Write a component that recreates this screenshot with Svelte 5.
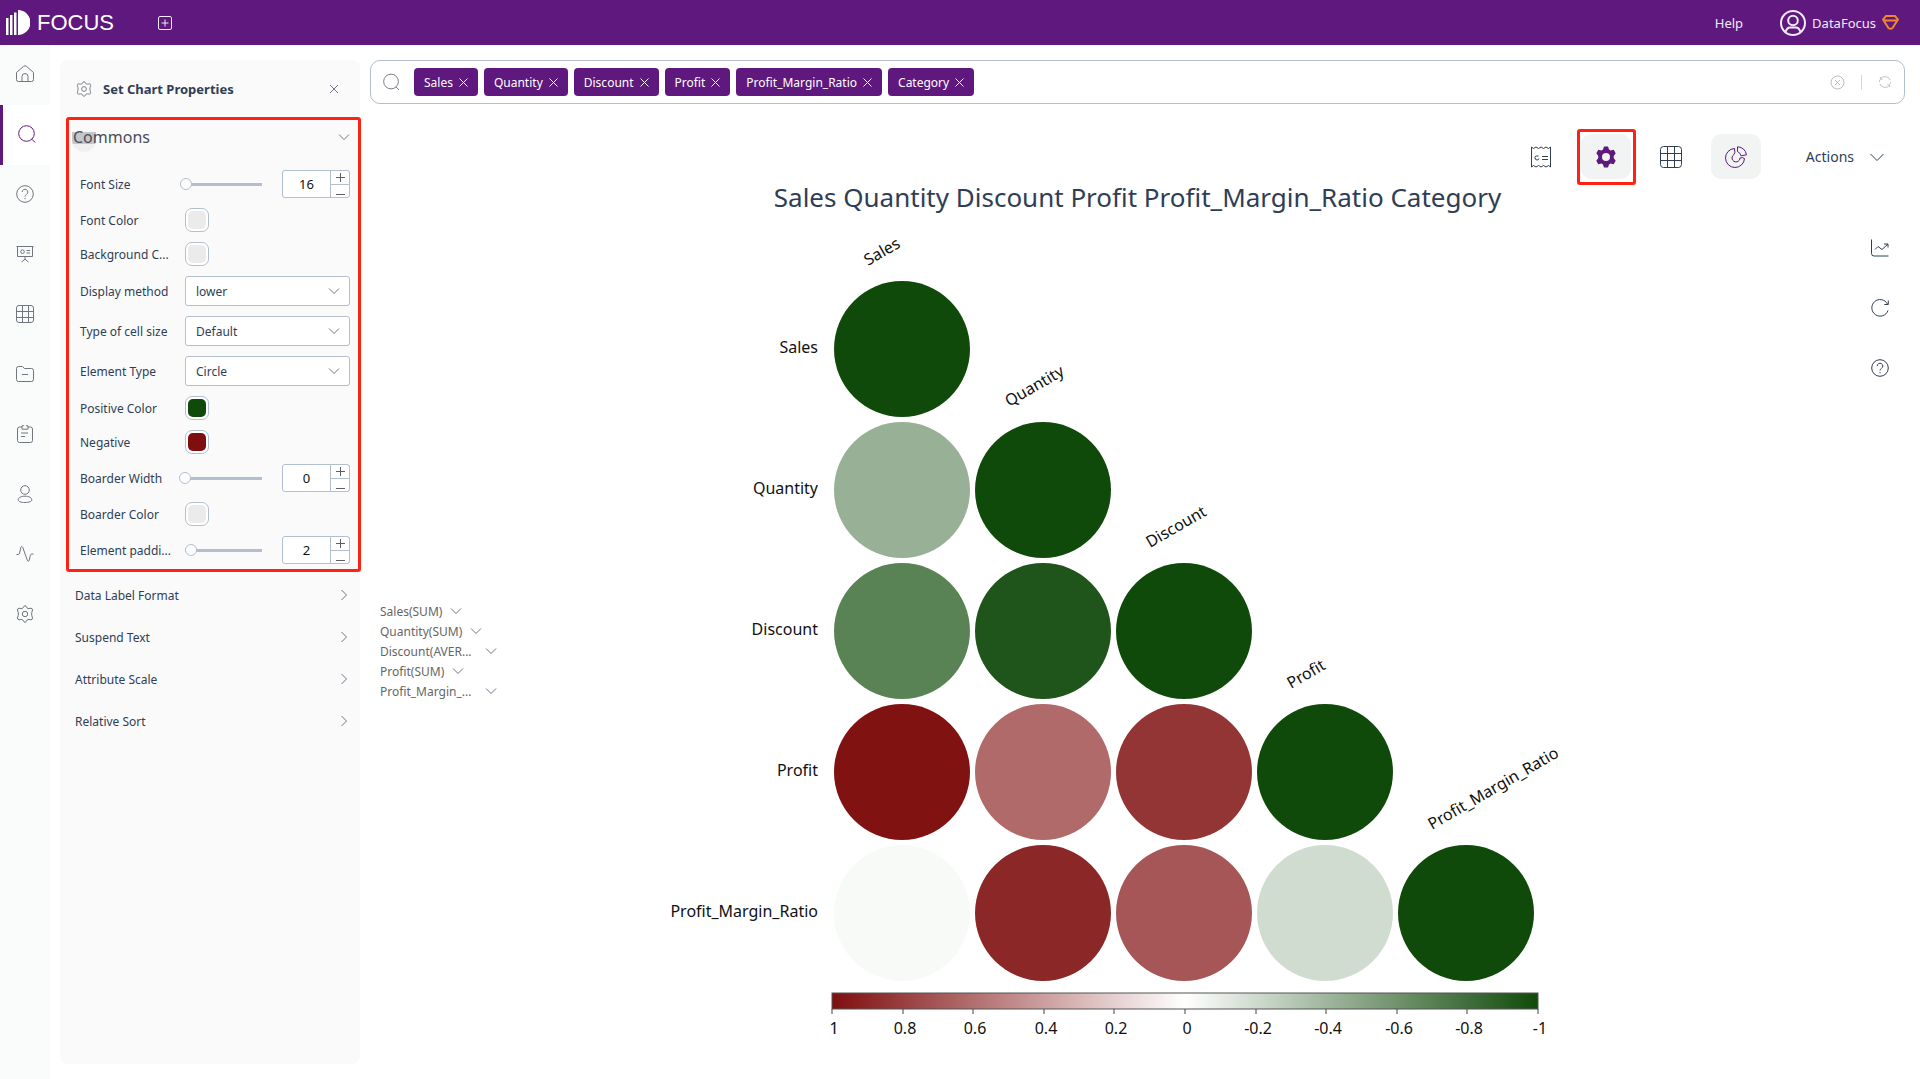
<script>
  const navItems = ['home', 'search', 'help', 'board', 'table', 'folder', 'clipboard', 'user', 'pulse', 'gear'];

  let fields = [
    { label: 'Font Size', type: 'range', value: 16, min: 12, max: 280 },
    { label: 'Font Color', type: 'color', value: '#ebebeb' },
    { label: 'Background C...', type: 'color', value: '#ebebeb' },
    { label: 'Display method', type: 'select', value: 'lower', options: ['lower', 'upper', 'full'] },
    { label: 'Type of cell size', type: 'select', value: 'Default', options: ['Default', 'Custom'] },
    { label: 'Element Type', type: 'select', value: 'Circle', options: ['Circle', 'Square'] },
    { label: 'Positive Color', type: 'color', value: '#104a0a' },
    { label: 'Negative', type: 'color', value: '#7f0e0e' },
    { label: 'Boarder Width', type: 'range', value: 0, min: 0, max: 24 },
    { label: 'Boarder Color', type: 'color', value: '#ebebeb' },
    { label: 'Element paddi...', type: 'range', value: 2, min: 0, max: 24 },
  ];

  const sections = ['Data Label Format', 'Suspend Text', 'Attribute Scale', 'Relative Sort'];

  let tags = ['Sales', 'Quantity', 'Discount', 'Profit', 'Profit_Margin_Ratio', 'Category'];

  const measures = [
    { text: 'Sales(SUM)' },
    { text: 'Quantity(SUM)' },
    { text: 'Discount(AVER...', cut: true },
    { text: 'Profit(SUM)' },
    { text: 'Profit_Margin_...', cut: true },
  ];

  const names = ['Sales', 'Quantity', 'Discount', 'Profit', 'Profit_Margin_Ratio'];

  // lower triangle, one row per measure
  const matrix = [
    ['#104a0a'],
    ['#98b096', '#104a0a'],
    ['#5a8355', '#1f551a', '#104a0a'],
    ['#811212', '#b06a6a', '#943535', '#104a0a'],
    ['#f8faf8', '#8c2727', '#a65656', '#d1dcd0', '#104a0a'],
  ];

  const ticks = ['1', '0.8', '0.6', '0.4', '0.2', '0', '-0.2', '-0.4', '-0.6', '-0.8', '-1'];

  const pitch = 141;
  const cx = (c) => 402 + c * pitch;
  const cy = (r) => 133 + r * pitch;
  const tickX = (i) => Math.round(332 + i * 70.6);

  function removeTag(tag) {
    tags = tags.filter((t) => t !== tag);
  }

  function step(field, by) {
    field.value = Math.min(field.max, Math.max(field.min, field.value + by));
    fields = fields;
  }
</script>

<svg class="defs" aria-hidden="true">
  <symbol id="home" viewBox="0 0 18 18"><path d="M.5 7.500 7.600 1.300q1.400-1 2.800 0L17.500 7.500v7.200q0 1.800-1.800 1.800H2.300Q.5 16.500.5 14.700zM6 16.500v-5a3 3 0 0 1 6 0v5" /></symbol>
  <symbol id="search" viewBox="0 0 18 18"><circle cx="8.500" cy="8.500" r="7.800" /><path d="m13.800 14.200 3.200 3.200" /></symbol>
  <symbol id="help" viewBox="0 0 18 18"><circle cx="9" cy="9" r="8.300" /><path d="M6.200 7a2.800 2.800 0 1 1 4.300 2.400Q9 10.300 9 11.600M9 13v1.200" /></symbol>
  <symbol id="board" viewBox="0 0 18 18"><path d="M.5 1.500h17M1.500 1.500v10h15v-10M9 11.500v3M5.500 17 9 14.200l3.500 2.800M10.500 5.500H14M10.500 8H14" /><circle cx="6.500" cy="6.700" r="1.800" /></symbol>
  <symbol id="table" viewBox="0 0 18 18"><rect x="0.500" y="0.500" width="17" height="17" rx="2.500" /><path d="M.5 6.500h17M.5 12.500h17M6.500.5v17M12.500.5v17" /></symbol>
  <symbol id="folder" viewBox="0 0 18 18"><path d="M.5 3.500q0-2 2-2h4l2 2h7q2 0 2 2v9q0 2-2 2h-13q-2 0-2-2zM6 9.500h6" /></symbol>
  <symbol id="clipboard" viewBox="0 0 18 18"><path d="M6 2H3.500Q1.500 2 1.500 4v11.500q0 2 2 2h11q2 0 2-2V4q0-2-2-2H12M6 .8h1.500a1.500 1.500 0 0 1 3 0H12v3.400H6zM5 8h7M5 11.500h4" /></symbol>
  <symbol id="user" viewBox="0 0 18 18"><circle cx="9" cy="5" r="4.300" /><path d="M9 11.200c-4 0-6.800 1.600-6.800 3.500S5 17.500 9 17.500s6.800-.9 6.800-2.800-2.800-3.500-6.800-3.500z" /></symbol>
  <symbol id="pulse" viewBox="0 0 18 18"><path d="M.5 9.500h2Q3.200 9.500 3.600 8l1.200-5.500Q5.600.2 6.800 2.500l4.500 12.700q1.200 2.500 2-.2l1-4.500q.4-1.500 1.400-1.500h1.800" /></symbol>
  <symbol id="gear" viewBox="0 0 18 18"><path d="M8 1.200Q9 .2 10 1.200L11.300 3.200Q12 3.700 13 3.500L15 3.200Q16.500 3.400 16.500 5L15.800 7.500Q15.500 9 15.800 10.500L16.500 13Q16.500 14.600 15 14.800L13 14.500Q12 14.300 11.300 14.800L10 16.800Q9 17.800 8 16.800L6.700 14.800Q6 14.300 5 14.500L3 14.800Q1.500 14.600 1.500 13L2.200 10.500Q2.500 9 2.200 7.500L1.500 5Q1.500 3.400 3 3.200L5 3.500Q6 3.700 6.700 3.200z" /><circle cx="9" cy="9" r="2.700" /></symbol>
  <symbol id="down" viewBox="0 0 12 12"><path d="m1 3.500 5 5 5-5" /></symbol>
  <symbol id="right" viewBox="0 0 12 12"><path d="m3.500 1 5 5-5 5" /></symbol>
  <symbol id="close" viewBox="0 0 12 12"><path d="m2 2 8 8M10 2l-8 8" /></symbol>
</svg>

<div class="page">
  <header class="topbar">
    <a class="logo" href="/" aria-label="FOCUS home">
      <svg width="24" height="25" viewBox="0 0 24 25" fill="#fff">
        <path d="M0 8h2.500v17H0zM4 5h2.500v20H4zM8 2.500h2.500V25H8zM12 0a12.500 12.500 0 0 1 0 25z" />
      </svg>
      <span>FOCUS</span>
    </a>
    <button class="add" aria-label="New">
      <svg width="14" height="14" viewBox="0 0 14 14"><rect x="0.500" y="0.500" width="13" height="13" rx="1.500" /><path d="M7 3.500v7M3.500 7h7" /></svg>
    </button>
    <a class="help" href="/help">Help</a>
    <button class="account">
      <svg width="26" height="26" viewBox="0 0 26 26"><circle cx="13" cy="13" r="12" /><circle cx="13" cy="10.500" r="4.800" /><path d="M5.500 22q1.500-4.500 4.500-4.500h6q3 0 4.500 4.500" /></svg>
      <span>DataFocus</span>
      <svg class="gem" width="17" height="15" viewBox="0 0 17 15"><path d="M4 1h9l3 3.500L10.500 13q-2 1.500-4 0L1 4.500zM1.500 5.500h14" /></svg>
    </button>
  </header>

  <div class="body">
    <nav>
      {#each navItems as item}
        <a href="/{item}" class:active={item === 'search'} aria-label={item}>
          <svg class="icon"><use href="#{item}" /></svg>
        </a>
      {/each}
    </nav>

    <aside>
      <div class="aside-head">
        <svg class="icon small"><use href="#gear" /></svg>
        <h1>Set Chart Properties</h1>
        <button aria-label="Close"><svg class="chev"><use href="#close" /></svg></button>
      </div>

      <section class="commons">
        <button class="commons-head">
          <span>Commons</span>
          <svg class="chev"><use href="#down" /></svg>
        </button>
        {#each fields as field, i}
          <div class="field {field.type}">
            <label for="field-{i}">{field.label}</label>
            {#if field.type === 'range'}
              <input id="field-{i}" class="slider" type="range" min={field.min} max={field.max} bind:value={field.value}>
              <div class="number">
                <input type="number" aria-label={field.label} bind:value={field.value}>
                <div class="steps">
                  <button aria-label="Increase" on:click={() => step(field, 1)}><svg width="11" height="11" viewBox="0 0 11 11"><path d="M5.500 1v9M1 5.500h9" /></svg></button>
                  <button aria-label="Decrease" on:click={() => step(field, -1)}><svg width="11" height="11" viewBox="0 0 11 11"><path d="M1 8.500h9" /></svg></button>
                </div>
              </div>
            {:else if field.type === 'color'}
              <input id="field-{i}" class="swatch" type="color" bind:value={field.value}>
            {:else}
              <div class="drop">
                <select id="field-{i}" bind:value={field.value}>
                  {#each field.options as option}
                    <option>{option}</option>
                  {/each}
                </select>
                <svg class="chev"><use href="#down" /></svg>
              </div>
            {/if}
          </div>
        {/each}
      </section>

      {#each sections as name}
        <button class="section">
          <span>{name}</span>
          <svg class="chev"><use href="#right" /></svg>
        </button>
      {/each}
    </aside>

    <main>
      <div class="searchbar">
        <svg class="icon lens"><use href="#search" /></svg>
        {#each tags as tag}
          <span class="tag">
            {tag}
            <button aria-label="Remove {tag}" on:click={() => removeTag(tag)}><svg viewBox="0 0 9 9"><path d="m.5.5 8 8M8.500.5l-8 8" /></svg></button>
          </span>
        {/each}
        <input type="text" aria-label="Search">
        <button class="ghost" aria-label="Clear">
          <svg width="15" height="15" viewBox="0 0 15 15"><circle cx="7.500" cy="7.500" r="6.500" /><path d="m5 5 5 5M10 5l-5 5" /></svg>
        </button>
        <i class="divider"></i>
        <button class="ghost" aria-label="Refresh">
          <svg width="14" height="14" viewBox="0 0 15 15"><path d="M2 9.500a6 6 0 0 0 10.500 1.300M13 5.500A6 6 0 0 0 2.500 4.200M1.500 7.500a6 6 0 0 1 .3-2M13.500 7.500a6 6 0 0 1-.3 2M2.500 2v2.500H5M12.500 13v-2.500H10" /></svg>
        </button>
      </div>

      <div class="toolbar">
        <button aria-label="Formula">
          <svg width="20" height="22" viewBox="0 0 20 22"><path d="M.5 1v20M19.500 1v20M.5 1l2 1.500L5 1l2.500 1.500L10 1l2.500 1.500L15 1l2.500 1.500L19.500 1M.5 21l2-1.500L5 21l2.500-1.500L10 21l2.500-1.500L15 21l2.500-1.500 2 1.500M7.500 10H5.300Q4 10 4 11.500 4 14 6 14t2-1.500M11 10.500h6M11 13.500h6" /></svg>
        </button>
        <button class="on marked" aria-label="Chart settings">
          <svg width="22" height="22" viewBox="0 0 22 22"><path class="solid" fill-rule="evenodd" d="M9 .5h4l1 3 1.500.9 3.200-.6 2 3.500L18.700 10v2l2 2.700-2 3.500-3.200-.6-1.500.9-1 3H9l-1-3-1.500-.9-3.200.6-2-3.500L3.300 12v-2l-2-2.700 2-3.500 3.200.6L8 3.500zM11 7a4 4 0 1 0 0 8 4 4 0 0 0 0-8z" /></svg>
        </button>
        <button aria-label="Table view">
          <svg width="22" height="22" viewBox="0 0 22 22"><rect x="0.500" y="0.500" width="21" height="21" rx="3" /><path d="M.5 7.500h21M.5 14.500h21M7.500.5v21M14.500.5v21" /></svg>
        </button>
        <button class="on" aria-label="Chart view">
          <svg class="violet" width="22" height="22" viewBox="0 0 22 22"><path d="M9.500 2.500A9.500 9.500 0 1 0 19.500 12.500q-2-1.500-4.500-.5A4 4 0 1 1 9 8.500Q10.500 7.500 9.500 2.500zM12.500.8q7.500.5 9 8l-5.500 1Q15.500 7 12.500 5.500z" /></svg>
        </button>
        <button class="actions">
          Actions
          <svg width="14" height="14" viewBox="0 0 14 14"><path d="m.5 4 6.500 6.500L13.500 4" /></svg>
        </button>
      </div>

      <h2>Sales Quantity Discount Profit Profit_Margin_Ratio Category</h2>

      <div class="stage">
        <ul class="measures">
          {#each measures as m}
            <li><button><span class:cut={m.cut}>{m.text}</span><svg class="chev"><use href="#down" /></svg></button></li>
          {/each}
        </ul>

        <svg class="chart" viewBox="0 0 1355 848" role="img" aria-label="Correlation matrix">
          <defs>
            <linearGradient id="scale">
              <stop offset="0" stop-color="#7f0e0e" />
              <stop offset="0.500" stop-color="#fff" />
              <stop offset="1" stop-color="#104a0a" />
            </linearGradient>
          </defs>
          {#each matrix as row, r}
            <text class="row-label" x="318" y={cy(r) + 4}>{names[r]}</text>
            <text transform="translate({cx(r) - 34} {cy(r) - 83}) rotate(-30)">{names[r]}</text>
            {#each row as fill, c}
              <circle cx={cx(c)} cy={cy(r)} r="68" {fill} />
            {/each}
          {/each}
          <rect x="332" y="777" width="706" height="16" fill="url(#scale)" stroke="#555" />
          {#each ticks as tick, i}
            <path class="tick" d="M{tickX(i)} 793v5" />
            <text class="tick-label" x={tickX(i) + 2} y="818">{tick}</text>
          {/each}
        </svg>

        <div class="side">
          <button aria-label="Trend">
            <svg class="icon" viewBox="0 0 18 18"><path d="M.5.5v14q0 2.500 2.500 2.500h14.500M4 10.500l3-3 4 3 6-5.500M13 5h4v3.500" /></svg>
          </button>
          <button aria-label="Reload">
            <svg class="icon" viewBox="0 0 18 18"><path d="M17 11.500a8.300 8.300 0 1 1-.5-6.500M17.300 1.500V5.500h-4" /></svg>
          </button>
          <button aria-label="Help"><svg class="icon"><use href="#help" /></svg></button>
        </div>
      </div>
    </main>
  </div>
</div>

<style>
  :global(body) {
    margin: 0;
    background: #fff;
  }
  .page {
    min-height: 100vh;
    display: flex;
    flex-direction: column;
    font-family: "Noto Sans", "Open Sans", sans-serif;
    font-size: 12px;
    color: #2f3e55;
  }
  .defs {
    position: absolute;
    width: 0;
    height: 0;
  }
  button {
    font: inherit;
    color: inherit;
    background: none;
    border: 0;
    padding: 0;
    display: flex;
    align-items: center;
    cursor: pointer;
  }
  a {
    color: inherit;
    text-decoration: none;
  }
  svg {
    fill: none;
    stroke: currentColor;
    flex: none;
  }
  .icon {
    width: 18px;
    height: 18px;
  }
  .icon.small {
    width: 16px;
    height: 16px;
  }
  .chev {
    width: 12px;
    height: 12px;
    color: #6d7688;
  }

  .topbar {
    height: 45px;
    background: #5e187e;
    color: #f3ebf6;
    font-size: 13px;
    display: flex;
    align-items: center;
    padding: 0 21px 0 6px;
  }
  .logo {
    display: flex;
    align-items: center;
    gap: 7px;
    color: #fff;
    font: 22px "Liberation Sans", Arial, sans-serif;
  }
  .logo svg {
    stroke: none;
    fill: #fff;
  }
  .add {
    margin-left: 44px;
  }
  .help {
    margin-left: auto;
  }
  .account {
    margin-left: 37px;
    gap: 6px;
  }
  .account svg {
    stroke-width: 2;
  }
  .account .gem {
    color: #f0862f;
  }

  .body {
    flex: 1;
    display: flex;
  }
  nav {
    width: 50px;
    background: #fafcfb;
    color: #70757e;
  }
  nav a {
    height: 60px;
    box-sizing: border-box;
    padding-bottom: 2px;
    display: flex;
    align-items: center;
    justify-content: center;
  }
  nav a.active {
    background: #fff;
    color: #5e187e;
    border-left: 3px solid #5e187e;
  }

  aside {
    width: 300px;
    margin: 15px 10px;
    background: #fafafb;
    border-radius: 8px;
    flex: none;
  }
  .aside-head {
    height: 57px;
    display: flex;
    align-items: center;
    padding: 0 20px 0 16px;
  }
  .aside-head .icon {
    color: #70757e;
  }
  h1 {
    margin: 0 auto 0 11px;
    font-size: 13px;
    font-weight: 700;
  }
  .commons {
    border: 3px solid #ff2213;
    border-radius: 3px;
    margin: 0 -1px 2px 6px;
  }
  .commons-head {
    position: relative;
    width: 100%;
    height: 34px;
    margin-bottom: 11px;
    padding: 0 8px 0 4px;
    justify-content: space-between;
    font-size: 16px;
    color: #4a4e58;
  }
  .commons-head span {
    position: relative;
  }
  .commons-head::before {
    content: "";
    position: absolute;
    left: 3px;
    top: 12px;
    width: 24px;
    height: 20px;
    background: linear-gradient(#c6c6ca 60%, #f0f0f1 60%);
    border-radius: 0 0 12px 12px;
  }
  .field {
    display: flex;
    align-items: center;
    height: 34px;
    padding: 0 8px 0 11px;
  }
  .field.range {
    height: 38px;
  }
  .field.select {
    height: 40px;
  }
  label {
    width: 105px;
    flex: none;
    white-space: nowrap;
  }
  .slider {
    appearance: none;
    flex: none;
    width: 83px;
    height: 12px;
    margin: 0 20px 0 -6px;
    background: linear-gradient(#b1bfce, #b1bfce) right center / 77px 3px no-repeat;
  }
  .slider::-webkit-slider-thumb {
    appearance: none;
    width: 12px;
    height: 12px;
    box-sizing: border-box;
    border: 1px solid #b1bfce;
    border-radius: 50%;
    background: #fff;
  }
  .number {
    flex: 1;
    min-width: 0;
    height: 28px;
    box-sizing: border-box;
    display: flex;
    border: 1px solid #b1bfce;
    border-radius: 3px;
    background: #fff;
  }
  .number input {
    appearance: textfield;
    flex: 1;
    width: 0;
    min-width: 0;
    border: 0;
    padding: 0;
    background: none;
    font: 13px "Noto Sans", sans-serif;
    color: #111;
    text-align: center;
  }
  .number input::-webkit-inner-spin-button {
    display: none;
  }
  .steps {
    width: 18px;
    flex: none;
    border-left: 1px solid #b1bfce;
    display: flex;
    flex-direction: column;
  }
  .steps button {
    height: 13px;
    justify-content: center;
    color: #5a5f70;
  }
  .steps button + button {
    box-sizing: border-box;
    border-top: 1px solid #b1bfce;
  }
  .swatch {
    appearance: none;
    width: 24px;
    height: 24px;
    box-sizing: border-box;
    padding: 2px;
    border: 1px solid #b1bfce;
    border-radius: 7px;
    background: #fff;
  }
  .swatch::-webkit-color-swatch-wrapper {
    padding: 0;
  }
  .swatch::-webkit-color-swatch {
    border: 0;
    border-radius: 5px;
  }
  .drop {
    flex: 1;
    display: grid;
    align-items: center;
  }
  .drop select,
  .drop .chev {
    grid-area: 1 / 1;
  }
  .drop .chev {
    justify-self: end;
    margin-right: 10px;
    pointer-events: none;
  }
  select {
    appearance: none;
    height: 30px;
    width: 100%;
    padding: 0 10px;
    border: 1px solid #b1bfce;
    border-radius: 3px;
    background: #fff;
    font: inherit;
    color: inherit;
  }
  .section {
    width: 100%;
    height: 42px;
    padding: 0 10px 0 15px;
    justify-content: space-between;
  }

  main {
    flex: 1;
    min-width: 0;
    margin: 15px 15px 15px 0;
    display: flex;
    flex-direction: column;
  }
  .searchbar {
    height: 44px;
    box-sizing: border-box;
    display: flex;
    align-items: center;
    gap: 6px;
    padding: 0 12px;
    border: 1px solid #b1bfce;
    border-radius: 10px;
  }
  .lens {
    margin-right: 8px;
    width: 17px;
    color: #70757e;
  }
  .searchbar input {
    flex: 1;
    min-width: 0;
    border: 0;
    outline: 0;
    font: inherit;
  }
  .tag {
    height: 28px;
    display: flex;
    align-items: center;
    gap: 6px;
    padding: 0 10px;
    background: #5e187e;
    border-radius: 4px;
    color: #fff;
  }
  .tag svg {
    width: 9px;
    height: 9px;
  }
  .ghost {
    color: #b8bcc4;
  }
  .divider {
    width: 1px;
    height: 15px;
    margin: 0 10px;
    background: #d5d7db;
  }

  .toolbar {
    display: flex;
    justify-content: flex-end;
    gap: 15px;
    padding: 30px 21px 0 0;
  }
  .toolbar button {
    position: relative;
    width: 50px;
    height: 45px;
    justify-content: center;
    border-radius: 10px;
  }
  .toolbar .on {
    background: #f2f4f3;
  }
  .toolbar .marked::after {
    content: "";
    position: absolute;
    inset: -5px -5px -6px -4px;
    border: 3px solid #ff2213;
    border-radius: 3px;
  }
  .violet {
    color: #5e187e;
  }
  .solid {
    fill: #5e187e;
    stroke: none;
  }
  .toolbar .actions {
    width: auto;
    margin-left: 30px;
    gap: 16px;
    font-size: 14px;
  }
  h2 {
    margin: 0;
    font-size: 26px;
    line-height: 37px;
    font-weight: 400;
    text-align: center;
  }
  .stage {
    flex: 1;
    display: flex;
    align-items: flex-start;
  }
  .measures {
    width: 120px;
    margin: 385px 0 0;
    padding: 0 0 0 10px;
    box-sizing: content-box;
    list-style: none;
    color: #666;
  }
  .measures button {
    height: 20px;
    gap: 8px;
    white-space: nowrap;
  }
  .cut {
    width: 97px;
    text-align: left;
  }
  .chart {
    flex: 1;
    min-width: 0;
    font-size: 16px;
  }
  .chart text {
    fill: #111;
    stroke: none;
  }
  .chart circle {
    stroke: none;
  }
  .row-label {
    text-anchor: end;
  }
  .tick {
    stroke: #444;
  }
  .tick-label {
    text-anchor: middle;
  }
  .side {
    width: 50px;
    padding-top: 2px;
  }
  .side button {
    width: 50px;
    height: 60px;
    justify-content: center;
  }
</style>
